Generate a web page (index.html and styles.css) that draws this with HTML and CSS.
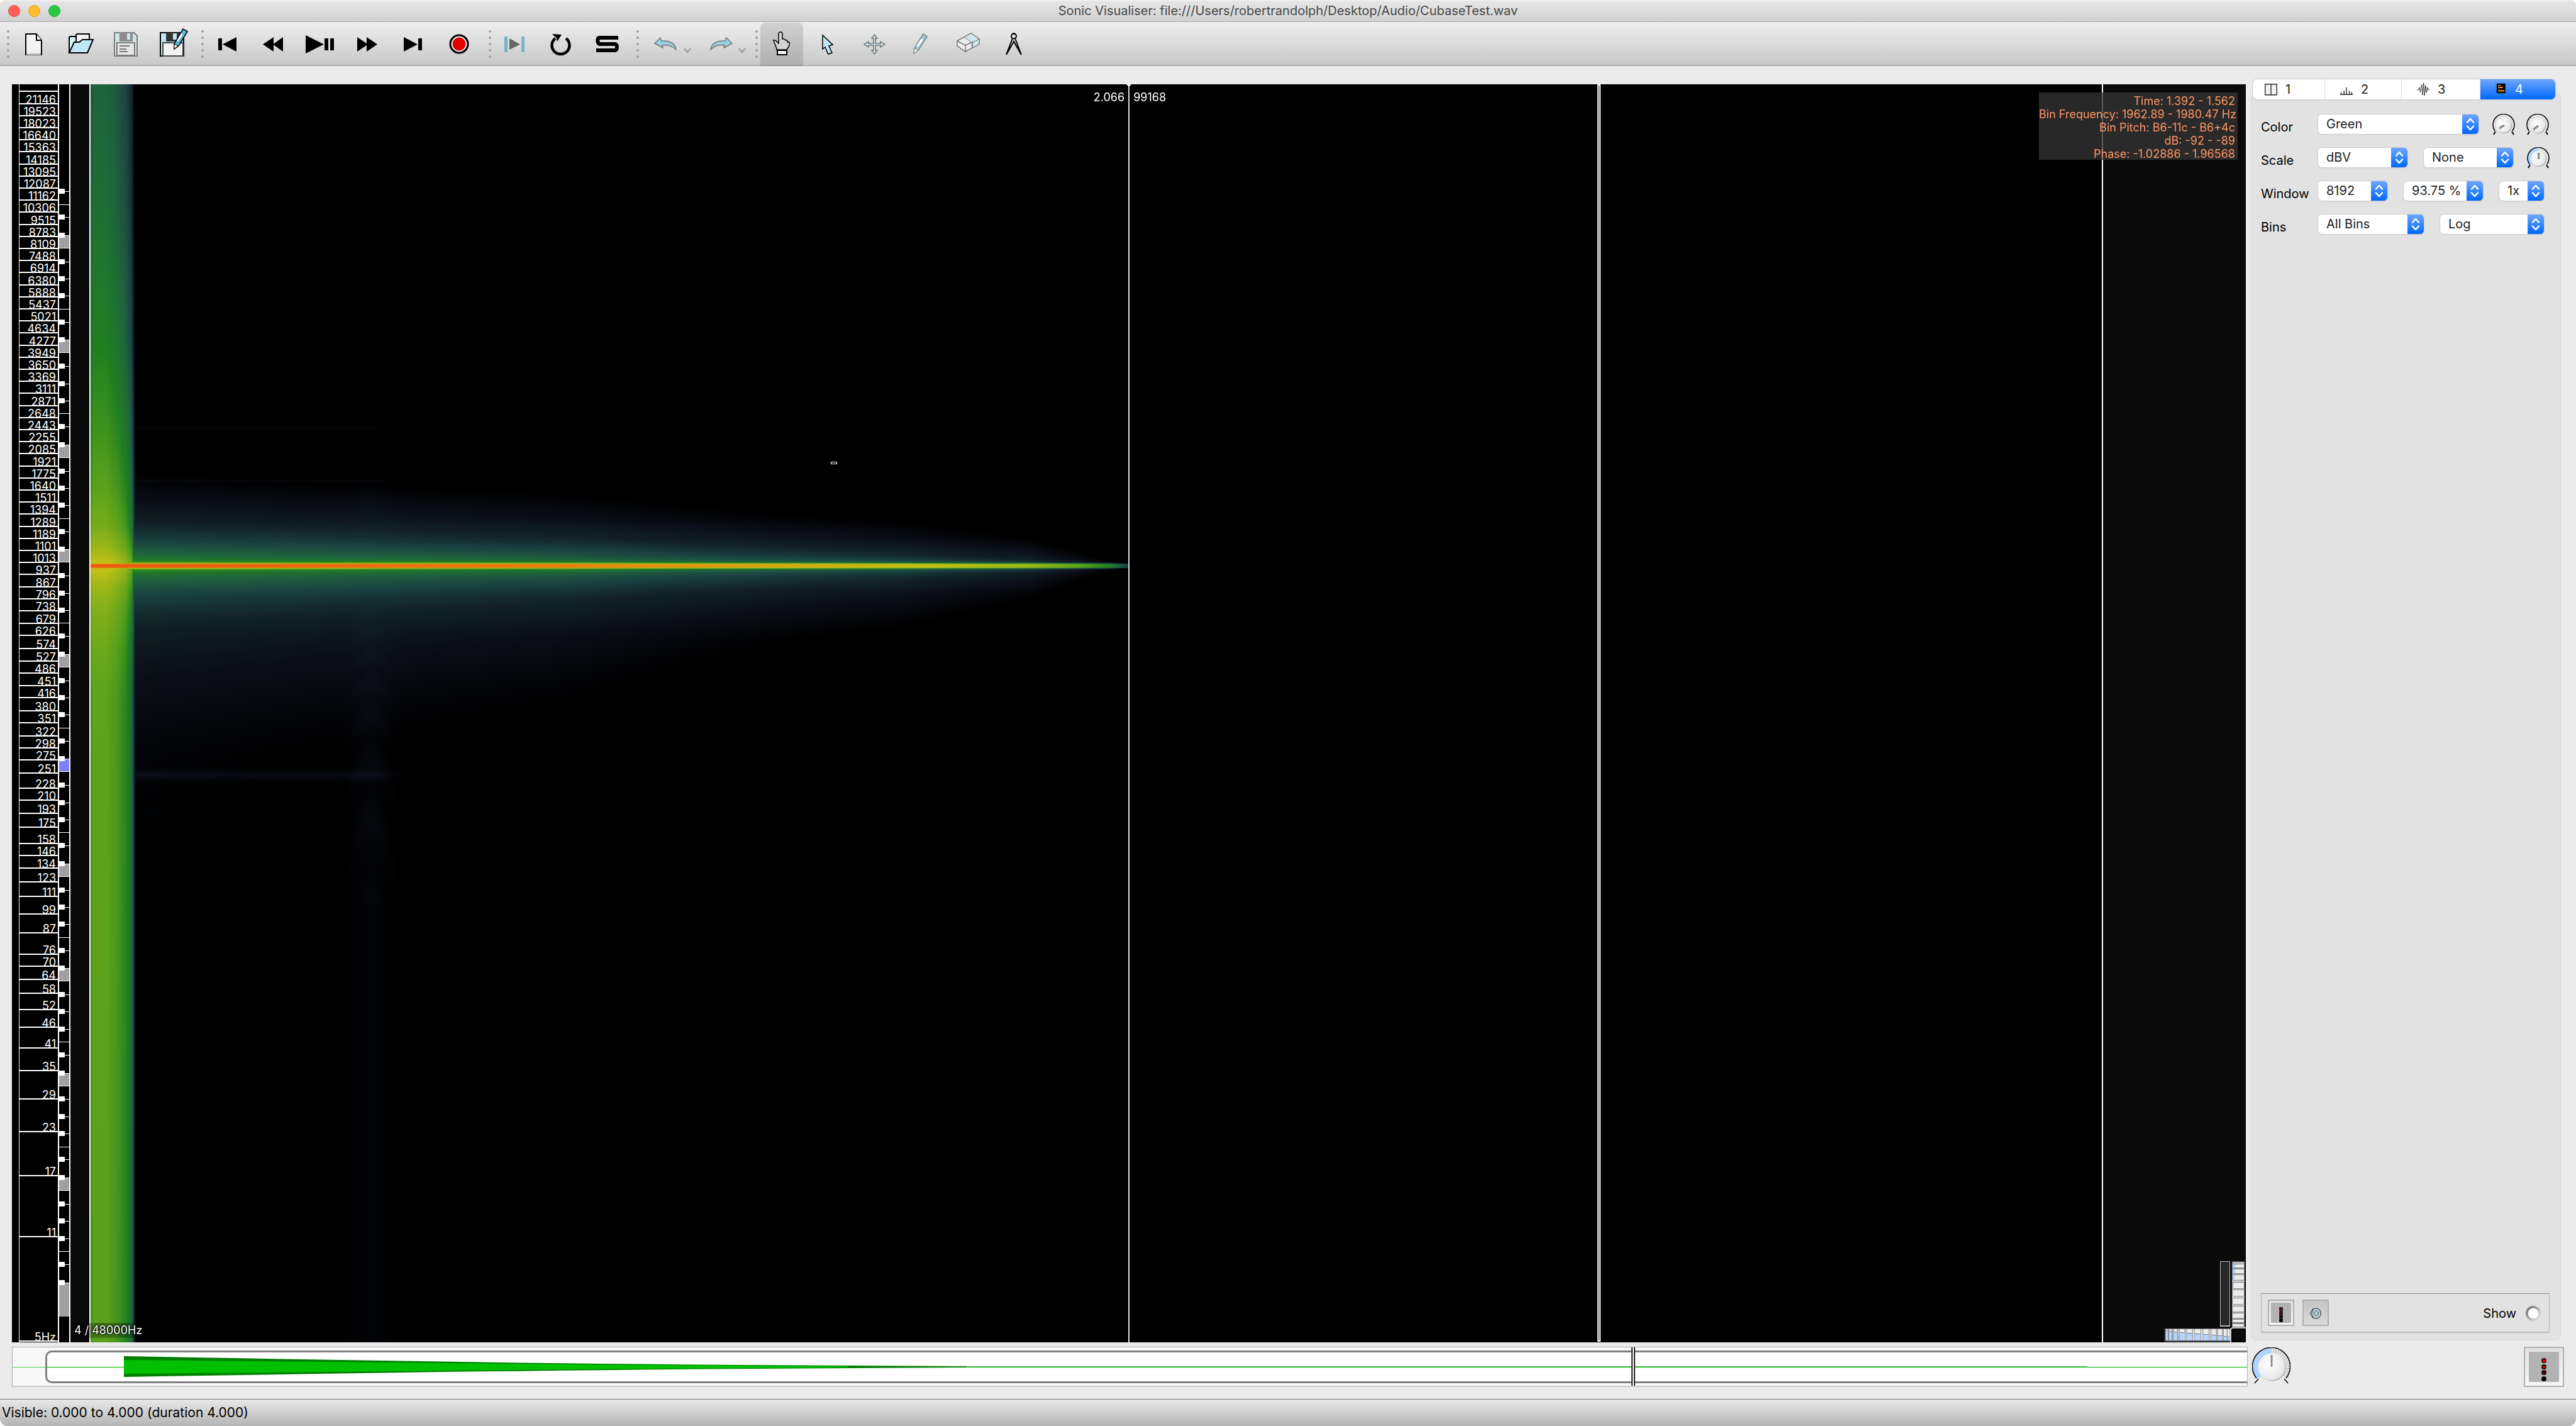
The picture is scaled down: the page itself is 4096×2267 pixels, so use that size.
FILE: index.html
```html
<!DOCTYPE html>
<html lang="en">
<head>
<meta charset="utf-8">
<title>Sonic Visualiser</title>
<link rel="stylesheet" href="styles.css">
</head>
<body>
<svg class="defs" aria-hidden="true">
  <defs>
    <radialGradient id="knob" cx="40%" cy="40%" r="65%">
      <stop offset="0" stop-color="#fff"/><stop offset=".75" stop-color="#ececec"/><stop offset="1" stop-color="#e0e0e0"/>
    </radialGradient>
    <linearGradient id="wheelV" x1="0" y1="0" x2="0" y2="1">
      <stop offset="0" stop-color="#555"/><stop offset=".15" stop-color="#bbb"/><stop offset=".5" stop-color="#f0f0f0"/><stop offset=".85" stop-color="#bbb"/><stop offset="1" stop-color="#555"/>
    </linearGradient>
    <linearGradient id="wheelH">
      <stop offset="0" stop-color="#555"/><stop offset=".15" stop-color="#bbb"/><stop offset=".5" stop-color="#f0f0f0"/><stop offset=".85" stop-color="#bbb"/><stop offset="1" stop-color="#555"/>
    </linearGradient>
    <symbol id="chevrons" viewBox="0 0 26 31">
      <path d="M8 12.500 13 7l5 5.500M8 18.500 13 24l5-5.500" fill="none" stroke="#fff" stroke-width="2.500" stroke-linecap="round" stroke-linejoin="round"/>
    </symbol>
    <symbol id="dial-body" viewBox="0 0 36 34">
      <path d="M4 27A17 17 0 1 1 32 27" fill="none" stroke="#000" stroke-width="1.500"/>
      <path d="M5 28 2 33M31 28l3 5" stroke="#000" stroke-width="2"/>
      <circle cx="19" cy="19" r="12" fill="#a8a8a8"/>
      <circle cx="18" cy="18" r="12" fill="url(#knob)"/>
    </symbol>
  </defs>
</svg>

<div class="window">
  <header class="titlebar">
    <button class="light light-close" aria-label="Close"></button>
    <button class="light light-min" aria-label="Minimise"></button>
    <button class="light light-max" aria-label="Zoom"></button>
    <h1 class="title">Sonic Visualiser: file:///Users/robertrandolph/Desktop/Audio/CubaseTest.wav</h1>
  </header>

  <nav class="toolbar" aria-label="Tools">
    <span class="grip"><i></i><i></i><i></i><i></i><i></i></span>
    <div class="tools">
      <button class="tool" aria-label="New"><svg viewBox="19 35 68 70"><path d="M41 54H58L66 64V87H41Z" fill="#f2f2f2" stroke="#000" stroke-width="2"/><path d="M42 86H65" stroke="#ccc" stroke-width="3"/><path d="M58 54V64H66" fill="#fff" stroke="#000" stroke-width="2"/></svg></button>
      <button class="tool" aria-label="Open"><svg viewBox="93 35 68 70"><path d="M110 84V59L112 58H120L122 61V84Z" fill="#d8f0f8" stroke="#000" stroke-width="2"/><path d="M121 70V55L123 54H142V66" fill="#f2f2f2" stroke="#000" stroke-width="2"/><path d="M110 84 118 67H126L131 63H148L139 84Z" fill="#c0e8f4" stroke="#000" stroke-width="2"/></svg></button>
      <button class="tool" aria-label="Save"><svg viewBox="167 35 68 70"><path d="M182 52H213L218 57V89H182Z" fill="#d0e4e8" stroke="#7c7c7c" stroke-width="2"/><path d="M190 52H211V66H190Z" fill="#8c8c8c"/><path d="M202 53H207V63H202Z" fill="#d0e4e8"/><path d="M186 68H214V88H186Z" fill="#e6e6e6" stroke="#7c7c7c" stroke-width="2"/><path d="M190 73H206M190 78H201M190 82H203" stroke="#777" stroke-width="2"/></svg></button>
      <button class="tool" aria-label="Save As"><svg viewBox="241 35 68 70"><path d="M255 52H292V89H255Z" fill="#c0e8f4" stroke="#000" stroke-width="2"/><path d="M264 52H287V66H264Z" fill="#333"/><path d="M275 53H281V63H275Z" fill="#c0e8f4"/><path d="M259 68H291V89H259Z" fill="#f2f2f2" stroke="#444" stroke-width="2"/><path d="M291 46 298 50 284 73 277 78V70Z" fill="#58b8d8" stroke="#000" stroke-width="1.500"/><path d="M288 53 291 55 283 66 281 65Z" fill="#fff"/><path d="M277 70 283 73 277 78Z" fill="#fff" stroke="#000"/></svg></button>
    </div>
    <span class="grip"><i></i><i></i><i></i><i></i><i></i></span>
    <div class="tools">
      <button class="tool" aria-label="Rewind to start"><svg viewBox="328 35 68 70"><path d="M347 61H353V80H347ZM376 59V82L354 70.500Z"/></svg></button>
      <button class="tool" aria-label="Rewind"><svg viewBox="402 35 68 70"><path d="M435 59V82L418 70.500ZM450 59V82L434 70.500Z"/></svg></button>
      <button class="tool" aria-label="Play / Pause"><svg viewBox="476 35 68 70"><path d="M486 56 515 70.500 486 85ZM516 61H522V80H516ZM525 61H531V80H525Z"/></svg></button>
      <button class="tool" aria-label="Fast forward"><svg viewBox="550 35 68 70"><path d="M568 59 585 70.500 568 82ZM583 59 600 70.500 583 82Z"/></svg></button>
      <button class="tool" aria-label="Forward to end"><svg viewBox="624 35 68 70"><path d="M642 59 664 70.500 642 82ZM665 61H671V80H665Z"/></svg></button>
      <button class="tool" aria-label="Record"><svg viewBox="698 35 68 70"><circle cx="730" cy="70" r="14" fill="#eee" stroke="#000" stroke-width="3"/><circle cx="730" cy="70" r="10.500" fill="#e00000"/></svg></button>
    </div>
    <span class="grip"><i></i><i></i><i></i><i></i><i></i></span>
    <div class="tools">
      <button class="tool" aria-label="Play selection"><svg viewBox="785 35 68 70"><path d="M802 58H807V83H802ZM829 58H834V83H829Z" fill="#7ab4c4"/><path d="M810 61 827 70.500 810 79Z" fill="#666"/></svg></button>
      <button class="tool" aria-label="Loop"><svg viewBox="859 35 68 70"><path d="M883 61A14 14 0 1 0 900 61" fill="none" stroke="#000" stroke-width="4.500"/><path d="M878 54 893 55 886 66 885 61Z"/></svg></button>
      <button class="tool" aria-label="Solo"><svg viewBox="933 35 68 70"><path d="M983 60H953C949 60 950 69 953 70H978C982 71 982 80 978 80H948" fill="none" stroke="#000" stroke-width="6"/></svg></button>
    </div>
    <span class="grip"><i></i><i></i><i></i><i></i><i></i></span>
    <div class="tools tools-tight">
      <button class="tool tool-menu" aria-label="Undo"><svg viewBox="1020 35 85 70"><path d="M1041 69 1050 60 1052 65C1066 64 1074 70 1075 79 1068 72 1062 71 1053 72L1054 76Z" fill="#98d0e0" stroke="#777" stroke-width="1.500"/><path d="M1088 77 1093 83 1098 77" fill="none" stroke="#a0a0a0" stroke-width="2.500"/></svg></button>
      <button class="tool tool-menu" aria-label="Redo"><svg viewBox="1105 35 85 70"><path d="M1164 69 1155 60 1153 65C1139 64 1131 70 1130 79 1137 72 1143 71 1152 72L1151 76Z" fill="#98d0e0" stroke="#777" stroke-width="1.500"/><path d="M1175 77 1180 83 1185 77" fill="none" stroke="#a0a0a0" stroke-width="2.500"/></svg></button>
    </div>
    <span class="grip"><i></i><i></i><i></i><i></i><i></i></span>
    <div class="tools">
      <button class="tool tool-on" aria-label="Navigate" aria-pressed="true"><svg viewBox="1209 35 68 70"><path d="M1235 79C1235 74 1231 70 1230 64 1233 63 1235 66 1238 69V53C1239 50 1243 50 1244 53V62C1247 61 1248 62 1249 64 1252 63 1252 65 1252 67 1255 66 1256 68 1255 71 1255 75 1252 76 1251 79Z" fill="#d4d4d6" stroke="#000" stroke-width="1.500"/><path d="M1236 80H1251V87H1236Z" fill="#f4f4f4" stroke="#000" stroke-width="2"/></svg></button>
      <button class="tool" aria-label="Select"><svg viewBox="1283 35 68 70"><path d="M1308 56V78L1312 75 1317 86 1323 84 1318 73 1324 71Z" fill="#c0e8f4" stroke="#000" stroke-width="1.500"/></svg></button>
      <button class="tool" aria-label="Edit"><svg viewBox="1357 35 68 70"><path d="M1390.500 55 1395 61H1392V69H1400V66L1407 70.500 1400 75V72H1392V80H1395L1390.500 86 1386 80H1389V72H1381V75L1374 70.500 1381 66V69H1389V61H1386Z" fill="#c8e4ec" stroke="#777" stroke-width="1.500"/></svg></button>
      <button class="tool" aria-label="Draw"><svg viewBox="1431 35 68 70"><path d="M1468 54 1474 58 1460 80 1453 85 1454 77Z" fill="#98d0e0" stroke="#777" stroke-width="1.500"/><path d="M1465 61 1468 63 1460 74 1457 73Z" fill="#fff"/><path d="M1454 77 1460 80 1453 85Z" fill="#fff" stroke="#777"/></svg></button>
      <button class="tool" aria-label="Erase"><svg viewBox="1505 35 68 70"><path d="M1522 65 1544 53 1557 62V70L1535 82 1522 73Z" fill="#eee" stroke="#777" stroke-width="1.500"/><path d="M1533 59 1544 53 1557 62 1546 68Z" fill="#d0e8ee" stroke="#777"/><path d="M1546 68 1557 62V70L1546 76Z" fill="#d0e8ee" stroke="#777"/><path d="M1522 65 1535 72V82M1535 72 1546 67V76" fill="none" stroke="#777" stroke-width="1.500"/></svg></button>
      <button class="tool" aria-label="Measure"><svg viewBox="1579 35 68 70"><circle cx="1612" cy="57.500" r="4" fill="#ddd" stroke="#000" stroke-width="2"/><path d="M1612 52V55" stroke="#000" stroke-width="3"/><path d="M1610 61 1600 87 1612 66 1624 87 1614 61" fill="none" stroke="#000" stroke-width="2"/></svg></button>
    </div>
  </nav>

  <main class="main">
    <section class="left">
      <div class="pane">
        <svg class="scale" id="scale" viewBox="19 134 93 2000" preserveAspectRatio="none" aria-label="Frequency scale"></svg>
        <div class="gutter"></div>
        <div class="lane">
          <canvas class="spectrum" id="spectrum"></canvas>
          <div class="centre-line"><span class="time-left">2.066</span><span class="time-right">99168</span></div>
          <div class="playhead"></div>
          <div class="bin-mark"></div>
        </div>
        <div class="after"></div>
        <p class="rate">4 / 48000Hz</p>
        <ul class="info">
          <li>Time: 1.392 - 1.562</li>
          <li>Bin Frequency: 1962.89 - 1980.47 Hz</li>
          <li>Bin Pitch: B6-11c - B6+4c</li>
          <li>dB: -92 - -89</li>
          <li>Phase: -1.02886 - 1.96568</li>
        </ul>
        <svg class="wheels" id="wheels" viewBox="3441 2004 130 130" aria-label="Zoom controls"></svg>
      </div>
      <svg class="overview" viewBox="0 0 3555 64" preserveAspectRatio="none" aria-label="Overview">
        <rect width="3555" height="64" fill="#f8f8f8"/>
        <path d="M0 32.500H53" stroke="#50d050"/>
        <rect x="54.500" y="7.500" width="3530" height="49" rx="9" fill="#fff" stroke="#808080" stroke-width="3"/>
        <path d="M58 19.500H3555M58 29.500H3555M58 35.500H3555M58 45.500H3555" stroke="#f6f6f6"/>
        <path d="M56 32.500H3555" stroke="#00b000"/>
        <path d="M1500 31.500H3300" stroke="#60c060"/>
        <path d="M178 15Q700 25 1091 28.500L1518 31V33L1091 35.500Q700 39 178 48Z" fill="#008000"/>
        <path d="M178 21Q700 26 1000 29L1329 31V33L1000 35Q700 38 178 43Z" fill="#00c000"/>
        <path d="M2576 1V62M2580 1V62" stroke="#282828" stroke-width="2"/><path d="M2578 1V62" stroke="#fff" stroke-width="2"/>
        <path d="M0 .500H3555M.500 0V64M3554.500 0V64" stroke="#b0b0b0" fill="none"/><path d="M0 63H3555" stroke="#ccc" stroke-width="2"/>
      </svg>
    </section>

    <aside class="right">
      <div class="tabs" role="tablist">
        <button class="tab tab-1" role="tab"><svg viewBox="0 0 26 28"><path d="M1 3.500H25V25.500H1ZM13 3.500V25.500" fill="#f2f2f2" stroke="#000" stroke-width="1.500"/></svg>1</button>
        <button class="tab tab-2" role="tab"><svg viewBox="0 0 26 28"><path d="M0 24.500H26M2 24V20M8 24V17M13 24V10M19 24V17M24 24V20" fill="none" stroke="#000" stroke-width="1.500"/></svg>2</button>
        <button class="tab tab-3" role="tab"><svg viewBox="0 0 26 28"><path d="M0 15H3L5 10 7 20 10 4 12 26 14 1 16 27 18 6 20 21 22 10 24 15H26" fill="none" stroke="#000" stroke-width="1"/></svg>3</button>
        <button class="tab tab-4" role="tab" aria-selected="true"><svg viewBox="0 0 26 28"><path d="M5 2H23V22H5Z" fill="#000"/><path d="M8 6H13M8 10H18M8 17H21" stroke="#f08a10" stroke-width="2.500"/><path d="M8 14H13M8 19.500H20" stroke="#c05808"/><path d="M2.500 0V28M0 25H26" stroke="#2090b8"/></svg>4</button>
      </div>

      <div class="panel">
        <div class="row">
          <label for="color">Color</label>
          <span class="pick w-255"><select id="color"><option>Green</option></select><svg><use href="#chevrons"/></svg></span>
          <label class="dial"><input type="range" aria-label="Threshold"><svg viewBox="0 0 36 34"><use href="#dial-body" width="36" height="34"/><path d="M5 30 9 26" stroke="#b0d4ff"/><path d="M19 18 11 23" stroke="#909090" stroke-width="3.500"/></svg></label>
          <label class="dial"><input type="range" aria-label="Colour rotation"><svg viewBox="0 0 36 34"><use href="#dial-body" width="36" height="34"/><path d="M5 30 9 26" stroke="#b0d4ff"/><path d="M19 19 11 25" stroke="#909090" stroke-width="3.500"/></svg></label>
        </div>
        <div class="row">
          <label for="scale-unit">Scale</label>
          <span class="pick w-142"><select id="scale-unit"><option>dBV</option></select><svg><use href="#chevrons"/></svg></span>
          <span class="pick w-142"><select aria-label="Normalisation"><option>None</option></select><svg><use href="#chevrons"/></svg></span>
          <label class="dial"><input type="range" aria-label="Gain"><svg viewBox="0 0 36 34"><path d="M5 29A17 17 0 0 1 18 1V18Z" fill="#b0d4ff"/><use href="#dial-body" width="36" height="34"/><path d="M18.500 9V19" stroke="#909090" stroke-width="3.500"/></svg></label>
        </div>
        <div class="row">
          <label for="window-size">Window</label>
          <span class="pick w-110"><select id="window-size"><option>8192</option></select><svg><use href="#chevrons"/></svg></span>
          <span class="pick w-126"><select aria-label="Overlap"><option>93.75 %</option></select><svg><use href="#chevrons"/></svg></span>
          <span class="pick w-71"><select aria-label="Oversampling"><option>1x</option></select><svg><use href="#chevrons"/></svg></span>
        </div>
        <div class="row">
          <label for="bins">Bins</label>
          <span class="pick w-168"><select id="bins"><option>All Bins</option></select><svg><use href="#chevrons"/></svg></span>
          <span class="pick w-165"><select aria-label="Bin scale"><option>Log</option></select><svg><use href="#chevrons"/></svg></span>
        </div>

        <div class="layer-box">
          <button class="square square-lit" aria-label="Playback"><svg viewBox="0 0 32 32"><rect width="32" height="32" fill="#b3b3b3" rx="1"/><g stroke="#000" stroke-width="1.500"><rect x="14" y="8" width="4" height="4" fill="#f00"/><rect x="14" y="14" width="4" height="4" fill="#a00"/><rect x="14" y="20" width="4" height="4" fill="#500"/><rect x="14" y="26" width="4" height="4"/></g></svg></button>
          <button class="square" aria-label="Play audio"><svg viewBox="0 0 32 32"><path d="M7 17 12 9V25Z" fill="#b8d8e0" stroke="#555"/><ellipse cx="17" cy="17" rx="7" ry="8" fill="#d8f4fa" stroke="#455" stroke-width="1.500"/><ellipse cx="17" cy="17" rx="4" ry="5" fill="#c8e8ee" stroke="#455"/><ellipse cx="17" cy="17" rx="2" ry="3" fill="#eff" stroke="#455"/></svg></button>
          <label class="show">Show<input type="checkbox"></label>
        </div>
      </div>

      <div class="transport">
        <label class="dial dial-big"><input type="range" aria-label="Playback speed"><svg viewBox="0 0 61 58">
          <path d="M9 51A30 30 0 0 1 31 1V30Z" fill="#b0d4ff"/>
          <path d="M33 6A24 25 0 0 1 51 47" fill="none" stroke="#b8b8b8" stroke-width="6" stroke-dasharray="1.500 2.500"/>
          <path d="M7 49A30 30 0 1 1 54 49" fill="none" stroke="#000" stroke-width="1.500"/><path d="M10 50 4 57M51 50 57 57" stroke="#000" stroke-width="1.500"/>
          <circle cx="32" cy="32" r="21.500" fill="#a8a8a8"/><circle cx="31" cy="31" r="21.500" fill="url(#knob)"/><path d="M31 12V31" stroke="#909090" stroke-width="3"/></svg></label>
        <button class="square square-lit square-big" aria-label="Master level"><svg viewBox="0 0 48 48"><rect width="48" height="48" fill="#b3b3b3" rx="1"/><g stroke="#000" stroke-width="1.500"><rect x="21" y="11" width="6" height="6" rx="2" fill="#f00"/><rect x="21" y="21" width="6" height="6" rx="2" fill="#a00"/><rect x="21" y="30" width="6" height="6" rx="2" fill="#500"/><rect x="21" y="40" width="6" height="6" rx="2"/></g></svg></button>
      </div>
    </aside>
  </main>

  <footer class="status">Visible: 0.000 to 4.000 (duration 4.000)</footer>
</div>
<script src="app.js"></script>
</body>
</html>
```
FILE: styles.css
```css
* { box-sizing: border-box; }
html { height: 100%; background: #fff; }
body { margin: 0; height: 100%; font: 20px/24px Inter, "Liberation Sans", sans-serif; color: #000; }
button, select, input { font: inherit; color: inherit; margin: 0; padding: 0; border: 0; }
.defs { position: absolute; width: 0; height: 0; }

.window { height: 100%; display: flex; flex-direction: column; background: #ebebeb; border-radius: 8px 8px 12px 12px; overflow: hidden; }

.titlebar { position: relative; flex: none; height: 35px; display: flex; align-items: center; gap: 13px; padding-left: 13px; background: linear-gradient(#f4f4f4, #e6e6e6 2px, #d0d0d0 34px); border-bottom: 1px solid #a8a8a8; }
.light { width: 19px; height: 19px; border-radius: 50%; border: 1px solid; }
.light-close { background: #ff5f57; border-color: #e2463f; }
.light-min { background: #ffbd2e; border-color: #e1a116; }
.light-max { background: #28c940; border-color: #12ac28; }
.title { position: absolute; left: 0; right: 0; margin: 0; text-align: center; font-size: 20px; font-weight: 400; color: #484848; pointer-events: none; }

.toolbar { flex: none; height: 70px; display: flex; background: linear-gradient(#fff, #eee 1px, #c8c8c8 68px); border-bottom: 2px solid #b0b0b0; }
.grip { width: 19px; padding: 13px 4px 0 0; display: flex; flex-direction: column; align-items: flex-end; gap: 6px; }
.grip i { width: 4px; height: 4px; border-radius: 50%; background: #a0a0a0; }
.tools { display: flex; gap: 6px; }
.tools-tight { gap: 0; }
.tool { width: 68px; height: 70px; background: none; }
.tool-menu { width: 85px; }
.tool svg { display: block; width: 100%; height: 70px; }
.tool-on { height: 69px; margin-top: 1px; border-radius: 8px 8px 0 0; background: rgba(0, 0, 0, .12); }
.tool-on svg { margin-top: -1px; }

.main { flex: 1; min-height: 0; display: flex; }
.left { flex: 1; min-width: 0; display: flex; flex-direction: column; gap: 7px; padding: 29px 0 19px 19px; }
.pane { position: relative; flex: 1; min-height: 0; margin-right: 3px; display: flex; background: #000; }
.scale { width: 93px; height: 100%; flex: none; }
.scale text { font-size: 18px; fill: #fff; text-anchor: end; }
.gutter { width: 32px; background: #0a0a0a; border-right: 2px solid #fff; }
.lane { position: relative; flex: 1; min-width: 0; }
.spectrum { display: block; width: 100%; height: 100%; }
.after { width: 229px; background: #0a0a0a; border-left: 2px solid #fff; }
.centre-line { position: absolute; top: 0; bottom: 0; left: 51.6%; width: 2px; background: #ddd; color: #fff; font-size: 18px; }
.centre-line::before { content: ""; position: absolute; top: 0; left: -3px; border: 4px solid transparent; border-top-color: #fff; border-bottom: 0; }
.time-left, .time-right { position: absolute; top: 9px; }
.time-left { right: 8px; }
.time-right { left: 8px; }
.playhead { position: absolute; top: 0; bottom: 1px; left: 74.92%; width: 5px; border: 2px solid #fff; background: #000; }
.bin-mark { position: absolute; left: 36.8%; top: 30%; width: 10px; height: 4px; border: 1px solid #fff; }
.rate { position: absolute; left: 99px; bottom: 7px; margin: 0; font-size: 18px; color: #fff; text-shadow: 0 0 2px #000, 0 0 3px #000, 0 0 4px #000; background: rgba(0, 0, 0, .25); }
.info { position: absolute; top: 13px; right: 13px; width: 316px; height: 107px; margin: 0; padding: 3px 4px 0 0; list-style: none; text-align: right; white-space: nowrap; font-size: 18px; line-height: 21px; color: #ff9664; background: rgba(51, 51, 51, .79); }
.wheels { position: absolute; right: 0; bottom: 0; width: 130px; height: 130px; }
.overview { display: block; flex: none; width: 100%; height: 64px; }

.right { flex: none; width: 522px; display: flex; flex-direction: column; padding: 21px 24px 19px 5px; }
.tabs { position: relative; flex: none; height: 32px; margin: 0 9px 0 3px; display: flex; border-radius: 7px; background: #fff; box-shadow: 0 0 0 1px #ccc, 0 1px 1px #999; overflow: hidden; }
.tab { display: flex; align-items: center; gap: 13px; padding-left: 19px; background: none; border-right: 1px solid #ddd; color: #222; }
.tab svg { width: 20px; height: 22px; }
.tab-1 { width: 115px; }
.tab-2 { width: 122px; padding-left: 24px; }
.tab-3 { width: 125px; padding-left: 24px; }
.tab-4 { flex: 1; padding-left: 22px; border: 0; color: #fff; background: linear-gradient(#6ea6ff, #0068ff); }

.panel { flex: 1; margin-top: -11px; padding: 34px 17px 11px 15px; display: flex; flex-direction: column; gap: 22px; background: #e2e2e2; border: 1px solid #dadada; border-radius: 8px; }
.row { display: flex; align-items: center; gap: 26px; height: 31px; }
.row > label:first-child { width: 91px; margin-right: -26px; padding-top: 8px; }
.pick { position: relative; flex: none; height: 31px; }
.pick select { appearance: none; display: block; width: 100%; height: 31px; padding: 0 0 1px 13px; border-radius: 6px; color: #222; background: linear-gradient(#6ea6ff, #0068ff) right / 26px 100% no-repeat #fff; box-shadow: 0 0 0 1px #ccc, 0 1px 1px #999; }
.pick svg { position: absolute; right: 0; top: 0; width: 26px; height: 31px; pointer-events: none; }
.w-255 { width: 255px; }
.w-168 { width: 168px; }
.w-165 { width: 165px; }
.w-142 { width: 142px; }
.w-126 { width: 126px; }
.w-110 { width: 110px; }
.w-71 { width: 71px; }
.dial { position: relative; flex: none; width: 36px; height: 34px; margin-left: -4px; }
.dial + .dial { margin-left: -8px; }
.dial svg { display: block; width: 100%; height: 100%; }
.dial input { position: absolute; inset: 0; width: 100%; height: 100%; opacity: 0; }
.layer-box { margin-top: auto; height: 63px; padding: 0 13px 0 10px; display: flex; align-items: center; gap: 13px; border: 1px solid #b8b8b8; border-top-color: #888; border-bottom-width: 2px; }
.square { display: flex; align-items: center; justify-content: center; width: 42px; height: 42px; border: 2px solid #b0b0b0; background: linear-gradient(#c4c4c4, #dadada); }
.square-lit { background: linear-gradient(#e2e2e2, #f6f6f6); }
.square svg { flex: none; width: 32px; height: 32px; }
.square-big { width: 64px; height: 64px; }
.square-big svg { width: 48px; height: 48px; }
.show { margin-left: auto; display: flex; align-items: center; gap: 15px; padding-top: 2px; }
.show input { appearance: none; width: 24px; height: 24px; border-radius: 50%; background: radial-gradient(circle closest-side, #fff 65%, transparent 72%), linear-gradient(135deg, #606060, #c0c0c0 65%, #f4f4f4); }
.transport { flex: none; display: flex; justify-content: space-between; align-items: center; height: 64px; margin: 10px -5px 0 2px; }
.dial-big { width: 61px; height: 58px; margin: 0 0 4px; }

.status { flex: none; height: 43px; padding: 9px 3px; font-size: 21px; border-top: 1px solid #707070; background: linear-gradient(#e8e8e8, #b4b4b4); }
```
FILE: app.js
```js
// Frequency scale: label and the y of the tick line beneath it.
const ticks = [
  ["", 145], [21146, 165], [19523, 184], [18023, 203], [16640, 222], [15363, 241], [14185, 261],
  [13095, 280], [12087, 299], [11162, 318], [10306, 337], [9515, 357], [8783, 376], [8109, 395],
  [7488, 414], [6914, 433], [6380, 453], [5888, 472], [5437, 491], [5021, 510], [4634, 529],
  [4277, 549], [3949, 568], [3650, 587], [3369, 606], [3111, 625], [2871, 645], [2648, 664],
  [2443, 683], [2255, 702], [2085, 721], [1921, 741], [1775, 760], [1640, 779], [1511, 798],
  [1394, 817], [1289, 837], [1189, 856], [1101, 875], [1013, 894], [937, 913], [867, 933],
  [796, 952], [738, 971], [679, 991], [626, 1010], [574, 1031], [527, 1051], [486, 1070],
  [451, 1090], [416, 1109], [380, 1130], [351, 1149], [322, 1170], [298, 1189], [275, 1208],
  [251, 1229], [228, 1253], [210, 1272], [193, 1293], [175, 1315], [158, 1341], [146, 1360],
  [134, 1380], [123, 1402], [111, 1425], [99, 1453], [87, 1483], [76, 1517], [70, 1536],
  [64, 1557], [58, 1579], [52, 1605], [46, 1633], [41, 1666], [35, 1702], [29, 1747],
  [23, 1799], [17, 1869], [11, 1966], ["5Hz", 2132]
];
const rect = (x, y, w, h, fill) => `<rect x="${x}" y="${Math.round(y)}" width="${w}" height="${h}" fill="${fill}"/>`;

let scale = rect(30, 134, 1, 2000, "#fff") + rect(92, 134, 2, 2000, "#fff") + rect(110, 134, 2, 2000, "#fff");
for (const [label, y] of ticks) {
  scale += `<text x="89" y="${y}">${label}</text>` + rect(30, y - 1, 62, 2, "#fff");
}

// Piano keyboard, one octave every 166.46 units, C at the foot of each.
for (let k = 0; k < 12; k++) {
  const top = 207.5 + k * 166.46;
  if (k > 0) {
    const last = k === 11;
    scale += rect(94, top, 16, last ? 54 : 20, k === 6 ? "#8080ff" : "#a0a0a4");
  }
  if (k > 0 && k < 11) scale += rect(94, top + 20, 16, 1, "#fff");
  if (k < 11) scale += rect(94, top + 117, 16, 1, "#fff");
  for (const b of [0, 41.8, 69.3, 96.4, 137.8]) {
    if ((k === 0 && b < 90) || (k === 11 && b > 0)) continue;
    scale += rect(94, top + b - 4, 9, 8, "#fff") + rect(103, top + b, 7, 1, "#fff");
  }
}
document.getElementById("scale").innerHTML = scale;

// Thumbwheels in the corner of the pane.
let w = rect(3530, 2005, 16, 104, "#b8b8b8") + rect(3531, 2006, 14, 101, "#282828");
w += rect(3549, 2005, 20, 105, "url(#wheelV)") + rect(3442, 2112, 105, 21, "url(#wheelH)");
w += rect(3550, 2006, 18, 1, "#888");
[[147, 153], [159, 178], [187, 210], [223, 252], [265, 299], [313, 348], [361, 396], [408, 439], [451, 478], [487, 502], [513, 528]]
  .forEach(([a, b], i) => {
    const y = 1968 + a * 0.2667, h = (b - a) * 0.2667;
    w += rect(3549, y - 1, 20, h + 2, "#808080") + rect(3550, y, 18, h, "#ebebeb");
    if (i < 5) w += rect(3550, y, 6 - i, h, "#b0d4ff");
  });
[[209, 214], [219, 227], [234, 246], [254, 270], [278, 296], [304, 323], [332, 350], [359, 375], [381, 395], [400, 410], [413, 420]]
  .forEach(([a, b], i) => {
    const x = 3344 + a * 0.4796, cw = (b - a) * 0.4796, top = 2115 + i;
    w += rect(x - 1, 2113, cw + 2, 18, "#909090") + rect(x, 2113, cw, 18, "#ebebeb");
    w += rect(x, top, cw, 2131 - top, "#b0d4ff") + rect(x, top, cw, 1, "#808080");
  });
w += rect(3442, 2112, 105, 1, "#777") + rect(3442, 2131, 105, 2, "#555");
w += `<path d="M3547 2134V2115Q3547 2111 3551 2111H3571" fill="none" stroke="#fff" stroke-width="1.5"/>`;
w += `<rect x="3549" y="2113" width="22" height="20" rx="2" fill="#0a0a0a" stroke="#000" stroke-width="2"/>`;
document.getElementById("wheels").innerHTML = w;

const palette = [
  [0, 0, 0], [11, 14, 24], [17, 33, 39], [26, 66, 64], [31, 99, 62], [32, 128, 32],
  [88, 160, 28], [140, 178, 26], [194, 192, 22], [224, 144, 16], [236, 90, 16]
];
function curve(stops, x) {
  if (x <= stops[0][0]) return stops[0][1];
  for (let i = 1; i < stops.length; i++) {
    if (x <= stops[i][0]) {
      const [x0, y0] = stops[i - 1], [x1, y1] = stops[i];
      return y0 + (y1 - y0) * (x - x0) / (x1 - x0);
    }
  }
  return stops[stops.length - 1][1];
}
const leak = [[0, 1], [.011, 1], [.015, .86], [.018, .68], [.026, .54], [.04, .48], [.07, .42], [.176, .3], [.366, .17], [.535, .1], [.718, .03], [1, -.02]];
const fade = [[0, 0], [.43, .07], [.565, .12], [.77, .19], [.9, .28], [.95, .39], [.98, .5], [1, .74]];
const onset = [[0, .4], [216, .44], [426, .5], [556, .56], [646, .61], [702, .66], [736, .73], [756, .79], [765, .83], [776, .79], [801, .73], [836, .68], [896, .64], [966, .615], [2000, .605]];
const onsetFall = [[0, 0], [.35, 0], [.6, .04], [.8, .1], [.93, .19], [1, .45]];

const canvas = document.getElementById("spectrum");
const W = canvas.width = canvas.clientWidth, H = canvas.height = canvas.clientHeight;
const ctx = canvas.getContext("2d");
const end = Math.round(W * .5165), onsetEnd = 70, mid = 765;
const img = ctx.createImageData(end, H);
const fades = [], falls = [], column = [];
for (let x = 0; x < end; x++) {
  fades[x] = curve(fade, (x - onsetEnd) / (end - onsetEnd));
  falls[x] = curve(onsetFall, x / onsetEnd);
  column[x] = Math.exp(-Math.pow((x - 445) / 30, 2));
}
for (let py = 0; py < H; py++) {
  const y = py * 2000 / H;
  const f = Math.pow(2, (mid - y) / 166.46);
  const peak = curve(leak, Math.abs(f - 1));
  const burst = curve(onset, y);
  const strength = y < 600 ? 0 : y < 700 ? (y - 600) / 100 * .05 : y < 1100 ? .05 : y < 1300 ? .05 : .035;
  for (let x = 0; x < end; x++) {
    let v = peak - fades[x];
    if (x <= onsetEnd) v = Math.max(burst - falls[x] - (x < 3 ? .04 : 0), v - .08 * (1 - x / onsetEnd) * (peak < .95));
    else {
      v = Math.max(v, 0);
      if (x < 540 && strength) {
        const dx = (x - 445) / 46;
        const ring = .8 + .25 * Math.cos(f * 68 + dx * dx * 7) * (y < 1300);
        v += column[x] * strength * ring * Math.max(0, 1 - v / .25);
      }
      if (x < 500) {
        const edge = Math.min(1, (500 - x) / 60);
        v += edge * (.07 * Math.exp(-Math.pow((y - 1098) / 7, 2)) + .05 * Math.exp(-Math.pow((y - 630) / 1.5, 2)) + .03 * Math.exp(-Math.pow((y - 545) / 1.2, 2)));
      }
    }
    v = Math.min(.999, Math.max(0, v)) * 10;
    const i = v | 0, t = v - i, a = palette[i], b = palette[i + 1], p = (py * end + x) * 4;
    img.data[p] = a[0] + (b[0] - a[0]) * t;
    img.data[p + 1] = a[1] + (b[1] - a[1]) * t;
    img.data[p + 2] = a[2] + (b[2] - a[2]) * t;
    img.data[p + 3] = 255;
  }
}
ctx.putImageData(img, 0, 0);
```
